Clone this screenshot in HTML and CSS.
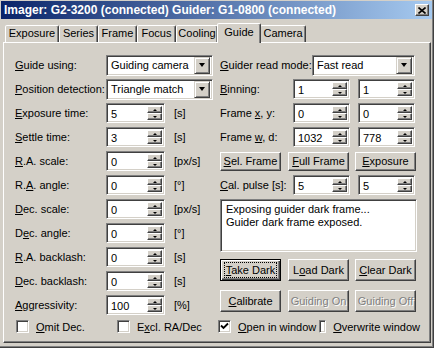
FILE: index.html
```html
<!DOCTYPE html>
<html lang="en">
<head>
    <meta charset="UTF-8">
    <title>Imager / Guider</title>
    <link rel="stylesheet" href="styles.css">
</head>
<body>
    <div class="window">
        <!-- title bar -->
        <div class="titlebar">
            <span class="title">Imager: G2-3200 (connected) Guider: G1-0800 (connected)</span>
            <span class="close-btn">
                <svg width="8" height="7" viewBox="0 0 8 7"><path d="M0.5 0.5 L7.5 6.5 M7.5 0.5 L0.5 6.5" stroke="#000" stroke-width="1.6"/></svg>
            </span>
        </div>

        <!-- tabs -->
        <div class="tabs">
            <span class="tab w-exposure">Exposure</span>
            <span class="tab w-series">Series</span>
            <span class="tab w-frame">Frame</span>
            <span class="tab w-focus">Focus</span>
            <span class="tab w-cooling">Cooling</span>
            <span class="tab active">Guide</span>
            <span class="tab w-camera">Camera</span>
        </div>

        <div class="panel">
            <div class="columns">
                <!-- left column -->
                <div class="col-left">
                    <div class="row">
                        <span class="label"><u>G</u>uide using:</span>
                        <div class="combo combo-left"><span class="combo-text">Guiding camera</span><span class="drop"><i class="arrow-down"></i></span></div>
                    </div>
                    <div class="row">
                        <span class="label"><u>P</u>osition detection:</span>
                        <div class="combo combo-left"><span class="combo-text">Triangle match</span><span class="drop"><i class="arrow-down"></i></span></div>
                    </div>
                    <div class="row">
                        <span class="label"><u>E</u>xposure time:</span>
                        <div class="spin"><span class="spin-val">5</span><span class="spin-btns"><b><i class="sm-up"></i></b><b><i class="sm-down"></i></b></span></div>
                        <span class="unit">[s]</span>
                    </div>
                    <div class="row">
                        <span class="label"><u>S</u>ettle time:</span>
                        <div class="spin"><span class="spin-val">3</span><span class="spin-btns"><b><i class="sm-up"></i></b><b><i class="sm-down"></i></b></span></div>
                        <span class="unit">[s]</span>
                    </div>
                    <div class="row">
                        <span class="label"><u>R</u>.A. scale:</span>
                        <div class="spin"><span class="spin-val">0</span><span class="spin-btns"><b><i class="sm-up"></i></b><b><i class="sm-down"></i></b></span></div>
                        <span class="unit">[px/s]</span>
                    </div>
                    <div class="row">
                        <span class="label">R.<u>A</u>. angle:</span>
                        <div class="spin"><span class="spin-val">0</span><span class="spin-btns"><b><i class="sm-up"></i></b><b><i class="sm-down"></i></b></span></div>
                        <span class="unit">[°]</span>
                    </div>
                    <div class="row">
                        <span class="label"><u>D</u>ec. scale:</span>
                        <div class="spin"><span class="spin-val">0</span><span class="spin-btns"><b><i class="sm-up"></i></b><b><i class="sm-down"></i></b></span></div>
                        <span class="unit">[px/s]</span>
                    </div>
                    <div class="row">
                        <span class="label">D<u>e</u>c. angle:</span>
                        <div class="spin"><span class="spin-val">0</span><span class="spin-btns"><b><i class="sm-up"></i></b><b><i class="sm-down"></i></b></span></div>
                        <span class="unit">[°]</span>
                    </div>
                    <div class="row">
                        <span class="label"><u>R</u>.A. backlash:</span>
                        <div class="spin"><span class="spin-val">0</span><span class="spin-btns"><b><i class="sm-up"></i></b><b><i class="sm-down"></i></b></span></div>
                        <span class="unit">[s]</span>
                    </div>
                    <div class="row">
                        <span class="label"><u>D</u>ec. backlash:</span>
                        <div class="spin"><span class="spin-val">0</span><span class="spin-btns"><b><i class="sm-up"></i></b><b><i class="sm-down"></i></b></span></div>
                        <span class="unit">[s]</span>
                    </div>
                    <div class="row">
                        <span class="label"><u>A</u>ggressivity:</span>
                        <div class="spin"><span class="spin-val">100</span><span class="spin-btns"><b><i class="sm-up"></i></b><b><i class="sm-down"></i></b></span></div>
                        <span class="unit">[%]</span>
                    </div>
                </div>

                <!-- right column -->
                <div class="col-right">
                    <div class="row">
                        <span class="label label-wide"><u>G</u>uider read mode:</span>
                        <div class="combo combo-right"><span class="combo-text">Fast read</span><span class="drop"><i class="arrow-down"></i></span></div>
                    </div>
                    <div class="row">
                        <span class="label label-short"><u>B</u>inning:</span>
                        <div class="spin spin-r"><span class="spin-val">1</span><span class="spin-btns"><b><i class="sm-up"></i></b><b><i class="sm-down"></i></b></span></div>
                        <div class="spin spin-r spin-2"><span class="spin-val">1</span><span class="spin-btns"><b><i class="sm-up"></i></b><b><i class="sm-down"></i></b></span></div>
                    </div>
                    <div class="row">
                        <span class="label label-short">Frame <u>x</u>, y:</span>
                        <div class="spin spin-r"><span class="spin-val">0</span><span class="spin-btns"><b><i class="sm-up"></i></b><b><i class="sm-down"></i></b></span></div>
                        <div class="spin spin-r spin-2"><span class="spin-val">0</span><span class="spin-btns"><b><i class="sm-up"></i></b><b><i class="sm-down"></i></b></span></div>
                    </div>
                    <div class="row">
                        <span class="label label-short">Frame <u>w</u>, d:</span>
                        <div class="spin spin-r"><span class="spin-val">1032</span><span class="spin-btns"><b><i class="sm-up"></i></b><b><i class="sm-down"></i></b></span></div>
                        <div class="spin spin-r spin-2"><span class="spin-val">778</span><span class="spin-btns"><b><i class="sm-up"></i></b><b><i class="sm-down"></i></b></span></div>
                    </div>
                    <div class="row btn-row">
                        <button class="btn btn-sm"><u>S</u>el. Frame</button>
                        <button class="btn btn-sm"><u>F</u>ull Frame</button>
                        <button class="btn btn-sm"><u>E</u>xposure</button>
                    </div>
                    <div class="row">
                        <span class="label label-short"><u>C</u>al. pulse [s]:</span>
                        <div class="spin spin-r"><span class="spin-val">5</span><span class="spin-btns"><b><i class="sm-up"></i></b><b><i class="sm-down"></i></b></span></div>
                        <div class="spin spin-r spin-2"><span class="spin-val">5</span><span class="spin-btns"><b><i class="sm-up"></i></b><b><i class="sm-down"></i></b></span></div>
                    </div>

                    <div class="memo">
                        <div>Exposing guider dark frame...</div>
                        <div>Guider dark frame exposed.</div>
                    </div>

                    <div class="btn-row btn-row-lg">
                        <button class="btn btn-lg btn-default"><span class="focus"><u>T</u>ake Dark</span></button>
                        <button class="btn btn-lg">L<u>o</u>ad Dark</button>
                        <button class="btn btn-lg"><u>C</u>lear Dark</button>
                    </div>
                    <div class="btn-row btn-row-lg">
                        <button class="btn btn-lg"><u>C</u>alibrate</button>
                        <button class="btn btn-lg disabled">Guiding On</button>
                        <button class="btn btn-lg disabled">Guiding Off</button>
                    </div>
                </div>
            </div>

            <!-- check boxes -->
            <div class="checks">
                <label class="check"><span class="box"></span><span><u>O</u>mit Dec.</span></label>
                <label class="check"><span class="box"></span><span>E<u>x</u>cl. RA/Dec</span></label>
                <label class="check"><span class="box"><svg width="9" height="9" viewBox="0 0 9 9"><path d="M1 3.5 L3.5 6 L8 1.5" fill="none" stroke="#000" stroke-width="1.8"/></svg></span><span><u>O</u>pen in window</span></label>
                <label class="check"><span class="box"></span><span><u>O</u>verwrite window</span></label>
            </div>
        </div>
    </div>
</body>
</html>
```

FILE: styles.css
```css
:root {
    --face: #d4d0c8;
    --light: #fff;
    --shadow: #808080;
    --dark: #404040;
}

* {
    box-sizing: border-box;
}

body {
    margin: 0;
    background: var(--face);
    font-family: "Liberation Sans", Arial, sans-serif;
    font-size: 11px;
    color: #000;
}

u {
    text-decoration: underline;
    text-underline-offset: 1px;
}

.window {
    width: 434px;
    height: 348px;
    padding: 1px 0 0 1px;
    background: var(--face);
    box-shadow: inset -1px -1px 0 var(--dark), inset -2px -2px 0 var(--shadow);
}

/* title bar */
.titlebar {
    display: flex;
    align-items: center;
    justify-content: space-between;
    width: 431px;
    height: 18px;
    padding: 0 3px 0 3px;
    background: linear-gradient(to right, #0a246a, #a6caf0);
}

.title {
    color: #fff;
    font-weight: bold;
    font-size: 12px;
    white-space: nowrap;
}

.close-btn {
    display: flex;
    align-items: center;
    justify-content: center;
    width: 14px;
    height: 12px;
    background: var(--face);
    border: 1px solid;
    border-color: var(--light) var(--dark) var(--dark) var(--light);
    box-shadow: inset -1px -1px 0 var(--shadow);
}

/* tabs */
.tabs {
    display: flex;
    align-items: flex-end;
    height: 21px;
    padding-left: 4px;
    margin-top: 2px;
    position: relative;
    z-index: 1;
}

.tab {
    height: 17px;
    line-height: 15px;
    text-align: center;
    border: 1px solid;
    border-bottom: none;
    border-color: var(--light) var(--dark) transparent var(--light);
    border-radius: 2px 2px 0 0;
    box-shadow: inset -1px 0 0 var(--shadow);
    background: var(--face);
}

.w-exposure { width: 54px; }
.w-series { width: 39px; }
.w-frame { width: 39px; }
.w-focus { width: 39px; }
.w-cooling { width: 42px; margin-right: -1px; }
.w-camera { width: 46px; margin-left: -1px; }

.tab.active {
    width: 44px;
    height: 20px;
    line-height: 16px;
    margin-bottom: -1px;
    position: relative;
}

/* tab panel */
.panel {
    width: 428px;
    height: 301px;
    margin-left: 2px;
    padding: 10px 0 0 11px;
    border: 1px solid;
    border-color: var(--light) var(--dark) var(--dark) var(--light);
    box-shadow: inset -1px -1px 0 var(--shadow);
}

.columns {
    display: flex;
    height: 264px;
}

.col-left {
    width: 205px;
}

.col-right {
    width: 200px;
}

.row {
    display: flex;
    align-items: center;
    height: 24px;
}

.label {
    width: 91px;
    white-space: nowrap;
}

.label-wide {
    width: 92px;
}

.label-short {
    width: 73px;
}

.unit {
    margin-left: 9px;
}

/* sunken fields */
.combo,
.spin,
.memo,
.box {
    background: #fff;
    border: 1px solid;
    border-color: var(--shadow) var(--light) var(--light) var(--shadow);
    box-shadow: inset 1px 1px 0 var(--dark), inset -1px -1px 0 var(--face);
}

.combo {
    display: flex;
    align-items: center;
    height: 21px;
    padding: 2px;
}

.combo-left {
    width: 107px;
}

.combo-right {
    width: 103px;
}

.combo-text {
    flex: 1;
    padding-left: 2px;
}

.drop {
    display: flex;
    align-items: center;
    justify-content: center;
    width: 16px;
    height: 17px;
    background: var(--face);
    border: 1px solid;
    border-color: var(--face) var(--dark) var(--dark) var(--face);
    box-shadow: inset 1px 1px 0 var(--light), inset -1px -1px 0 var(--shadow);
}

.arrow-down {
    width: 0;
    height: 0;
    border-left: 3.5px solid transparent;
    border-right: 3.5px solid transparent;
    border-top: 4px solid #000;
}

.spin {
    display: flex;
    width: 59px;
    height: 20px;
    padding: 2px 2px 2px 2px;
}

.spin-r {
    width: 57px;
}

.spin-2 {
    margin-left: 8px;
}

.spin-val {
    flex: 1;
    padding-left: 2px;
    line-height: 16px;
}

.spin-btns {
    display: flex;
    flex-direction: column;
    width: 15px;
}

.spin-btns b {
    flex: 1;
    display: flex;
    align-items: center;
    justify-content: center;
    background: var(--face);
    border: 1px solid;
    border-color: var(--light) var(--dark) var(--dark) var(--light);
    box-shadow: inset -1px -1px 0 var(--shadow);
}

.sm-up {
    width: 0;
    height: 0;
    border-left: 2px solid transparent;
    border-right: 2px solid transparent;
    border-bottom: 2px solid #000;
}

.sm-down {
    width: 0;
    height: 0;
    border-left: 2px solid transparent;
    border-right: 2px solid transparent;
    border-top: 2px solid #000;
}

/* buttons */
.btn-row {
    display: flex;
    gap: 7px;
}

.btn {
    width: 61px;
    padding: 0;
    font: inherit;
    color: #000;
    background: var(--face);
    border: 1px solid;
    border-color: var(--light) var(--dark) var(--dark) var(--light);
    box-shadow: inset -1px -1px 0 var(--shadow);
}

.btn-sm {
    height: 19px;
}

.btn-row .btn:last-child {
    margin-left: -1px;
}

.btn-row-lg {
    margin-top: 7px;
}

.btn-row-lg + .btn-row-lg {
    margin-top: 9px;
}

.btn-lg {
    height: 22px;
}

.btn-default {
    border: 1px solid #000;
    box-shadow: inset 1px 1px 0 var(--light), inset -1px -1px 0 var(--dark), inset -2px -2px 0 var(--shadow);
}

.focus {
    padding: 1px 1px;
    outline: 1px dotted #000;
    outline-offset: 0;
}

.btn.disabled {
    color: var(--shadow);
    text-shadow: 1px 1px 0 var(--light);
}

.memo {
    width: 197px;
    height: 53px;
    margin-top: 2px;
    padding: 3px 5px;
    line-height: 13px;
}

/* check boxes */
.checks {
    display: grid;
    grid-template-columns: repeat(4, 101px);
    margin: 3px 0 0 1px;
}

.check {
    display: flex;
    align-items: center;
    gap: 7px;
    white-space: nowrap;
}

.box {
    display: flex;
    align-items: center;
    justify-content: center;
    width: 13px;
    height: 13px;
}
```
